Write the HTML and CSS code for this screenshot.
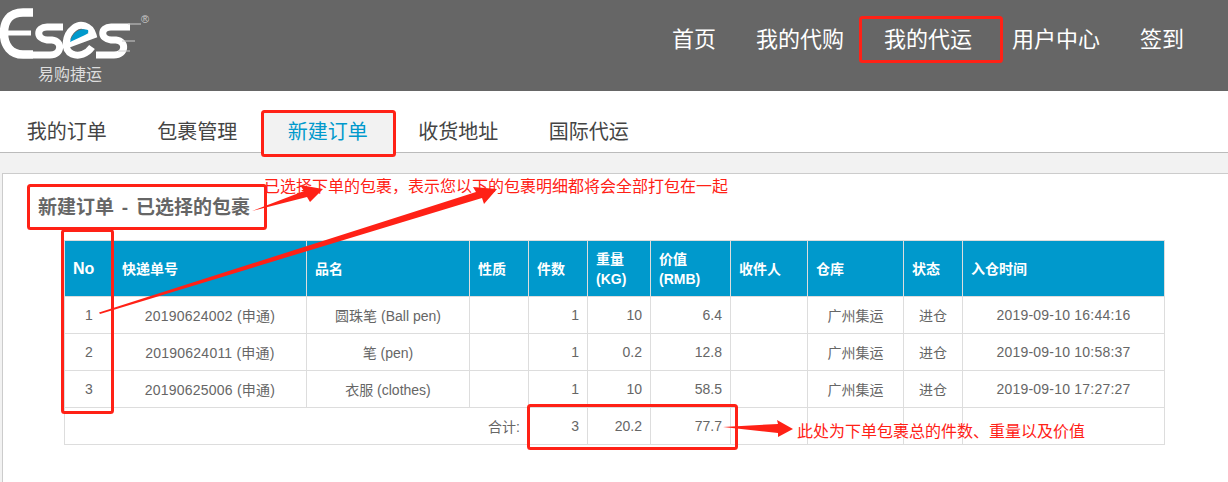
FILE: index.html
```html
<!DOCTYPE html>
<html lang="zh-CN">
<head>
<meta charset="utf-8">
<title>新建订单</title>
<link rel="stylesheet" href="styles.css">
</head>
<body>
<div class="page">
  <header class="topbar">
    <div class="logo">
      <svg class="logo-mark" width="150" height="64" viewBox="0 0 150 64" aria-label="Eses">
        <g fill="none" stroke="#fff" stroke-linecap="butt">
          <path d="M33 12.5 H23 C9 12.5 4 22 4 33 C4 46 11 54.5 23 54.5 H33" stroke-width="8.5"/>
          <path d="M4 33 H31" stroke-width="5"/>
          <path d="M63 27 H47 C36 27 36 39 47 40 H52 C63 41 62 55 50 55 H33" stroke-width="7"/>
          <path d="M69 44 L93 35 C90 25 80 23 74 28 C65 35 63 50 72 54 C79 57 87 54 92 47" stroke-width="7"/>
          <path d="M130 27 H111 C100 27 100 39 111 40 H116 C127 41 126 55 114 55 H96" stroke-width="7"/>
          <path d="M128 24 H141 M122 41 H135 M118 51 H130" stroke-width="1" stroke="#ccc"/>
        </g>
        <path d="M70 42 C72 33 80 27 88 30 C89 33 87 34 85 35 Z" fill="#0099cc"/>
        <text class="logo-reg" x="141" y="23">®</text>
      </svg>
      <span class="logo-name">易购捷运</span>
    </div>
    <nav class="mainnav">
      <a>首页</a>
      <a>我的代购</a>
      <a>我的代运</a>
      <a>用户中心</a>
      <a>签到</a>
    </nav>
  </header>

  <nav class="tabs">
    <a>我的订单</a>
    <a>包裹管理</a>
    <a class="active">新建订单</a>
    <a>收货地址</a>
    <a>国际代运</a>
  </nav>

  <main class="content">
    <section class="panel">
      <h2 class="panel-title">新建订单 - 已选择的包裹</h2>
      <table class="parcels">
        <colgroup>
          <col class="c-no"><col class="c-track"><col class="c-name"><col class="c-kind"><col class="c-qty">
          <col class="c-weight"><col class="c-value"><col class="c-to"><col class="c-wh"><col class="c-state"><col class="c-time">
        </colgroup>
        <thead>
          <tr>
            <th class="th-no">No</th><th>快递单号</th><th>品名</th><th>性质</th><th>件数</th>
            <th>重量<br>(KG)</th><th>价值<br>(RMB)</th><th>收件人</th><th>仓库</th><th>状态</th><th>入仓时间</th>
          </tr>
        </thead>
        <tbody>
          <tr>
            <td>1</td><td class="code">20190624002 (申通)</td><td>圆珠笔 (Ball pen)</td><td></td>
            <td class="num">1</td><td class="num">10</td><td class="num">6.4</td><td></td>
            <td>广州集运</td><td>进仓</td><td class="code">2019-09-10 16:44:16</td>
          </tr>
          <tr>
            <td>2</td><td class="code">20190624011 (申通)</td><td>笔 (pen)</td><td></td>
            <td class="num">1</td><td class="num">0.2</td><td class="num">12.8</td><td></td>
            <td>广州集运</td><td>进仓</td><td class="code">2019-09-10 10:58:37</td>
          </tr>
          <tr>
            <td>3</td><td class="code">20190625006 (申通)</td><td>衣服 (clothes)</td><td></td>
            <td class="num">1</td><td class="num">10</td><td class="num">58.5</td><td></td>
            <td>广州集运</td><td>进仓</td><td class="code">2019-09-10 17:27:27</td>
          </tr>
        </tbody>
        <tfoot>
          <tr>
            <td colspan="4" class="num">合计:</td>
            <td class="num">3</td><td class="num">20.2</td><td class="num">77.7</td>
            <td></td><td></td><td></td><td></td>
          </tr>
        </tfoot>
      </table>
    </section>
  </main>

  <span class="note note-top">已选择下单的包裹<span class="comma">，</span>表示您以下的包裹明细都将会全部打包在一起</span>
  <span class="note note-bottom">此处为下单包裹总的件数、重量以及价值</span>

  <svg class="marks" width="1228" height="482" viewBox="0 0 1228 482" aria-hidden="true">
    <g fill="none" stroke="#ff2116" stroke-width="3">
      <rect x="860.5" y="17.5" width="141" height="44" rx="2"/>
      <rect x="262.5" y="111.5" width="132" height="44" rx="2"/>
      <rect x="28.5" y="185.5" width="237" height="43" rx="2"/>
      <rect x="62.5" y="230.5" width="50" height="182" rx="2"/>
      <rect x="528.5" y="405.5" width="208" height="43" rx="2"/>
    </g>
    <g fill="#ff2116">
      <polygon points="252,211 304,191 300,185 323,189 310,202 307,197"/>
      <polygon points="99,312.5 476,192 473,187 497,189 484,204 482,198 100,314"/>
      <polygon points="723,427 778,424 777,420 793,429 778,437 778,433"/>
    </g>
  </svg>
</div>
</body>
</html>
```

FILE: styles.css
```css
* { box-sizing: border-box; }
html, body { margin: 0; padding: 0; }
body {
  font-family: "Liberation Sans", "Noto Sans CJK SC", sans-serif;
  color: #666;
  background: #fff;
}
.page {
  position: relative;
  width: 1228px;
  height: 482px;
  overflow: hidden;
}

/* top bar */
.topbar {
  display: flex;
  height: 91px;
  background: #666;
}
.logo {
  display: flex;
  flex-direction: column;
  width: 150px;
}
.logo-mark { display: block; }
.logo-reg {
  font-size: 11px;
  fill: #ccc;
}
.logo-name {
  margin: 2px 0 0 38px;
  font-size: 16px;
  line-height: 18px;
  color: #ddd;
}
.mainnav {
  display: flex;
  gap: 40px;
  margin-left: auto;
  padding-right: 44px;
}
.mainnav a {
  font-size: 22px;
  line-height: 79px;
  color: #fff;
}

/* tabs */
.tabs {
  display: flex;
  height: 62px;
  padding: 19px 0 0 1.5px;
  border-bottom: 1px solid #bbb;
}
.tabs a {
  height: 43px;
  padding: 0 25.25px;
  font-size: 20px;
  line-height: 44px;
  color: #444;
}
.tabs a.active {
  color: #0099cc;
  background: #f2f2f2;
}

/* panel */
.content {
  height: 329px;
  padding: 20px 0 0 2px;
  background: #f2f2f2;
}
.panel {
  height: 309px;
  padding: 0 63px 0 61px;
  background: #fff;
  border: 1px solid #ccc;
  border-width: 1px 0 0 1px;
}
.panel-title {
  height: 66px;
  margin: 0 0 0 -26px;
  font-size: 19px;
  font-weight: bold;
  line-height: 68px;
  word-spacing: 2.5px;
  color: #666;
}

/* table */
.parcels {
  width: 1100px;
  table-layout: fixed;
  border-collapse: collapse;
  font-size: 14px;
}
.c-no { width: 49px; }
.c-track { width: 193px; }
.c-name { width: 163px; }
.c-kind { width: 59px; }
.c-qty { width: 59px; }
.c-weight { width: 63px; }
.c-value { width: 80px; }
.c-to { width: 77px; }
.c-wh { width: 96px; }
.c-state { width: 59px; }
.c-time { width: 202px; }

.parcels th {
  height: 56px;
  padding: 0 8px;
  font-size: 14px;
  line-height: 20px;
  font-weight: bold;
  text-align: left;
  color: #fff;
  background: #0099cc;
  border: 1px solid #ddd;
}
.parcels th.th-no { font-size: 16px; }
.parcels td {
  height: 37px;
  padding: 0 8px;
  text-align: center;
  color: #666;
  border: 1px solid #ddd;
}
.parcels td.num { text-align: right; }
.parcels td.code { letter-spacing: 0.22px; }

/* annotations laid over the page */
.note {
  position: absolute;
  font-size: 16px;
  line-height: 20px;
  color: #ff2116;
  white-space: nowrap;
}
.note-top { left: 264px; top: 175px; }
.note-bottom { left: 797px; top: 422px; }
.comma { font-family: "Noto Sans CJK TC", sans-serif; }
.marks {
  position: absolute;
  left: 0;
  top: 0;
}
```
